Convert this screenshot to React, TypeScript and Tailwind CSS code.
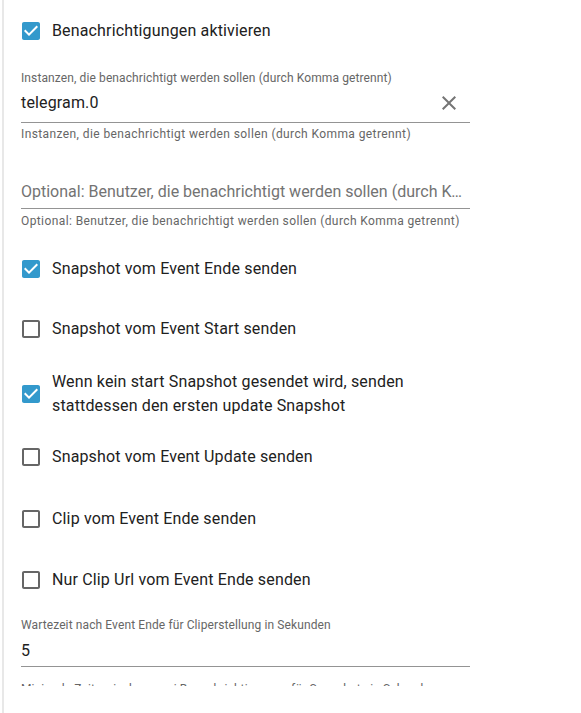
import React from "react";

const Checked = () => (
  <svg width="24" height="24" viewBox="0 0 24 24" className="block">
    <path
      fill="#3399cc"
      d="M19 3H5c-1.11 0-2 .9-2 2v14c0 1.1.89 2 2 2h14c1.11 0 2-.9 2-2V5c0-1.1-.89-2-2-2zm-9 14l-5-5 1.41-1.41L10 14.17l7.59-7.59L19 8l-9 9z"
    />
  </svg>
);

const Unchecked = () => (
  <svg width="24" height="24" viewBox="0 0 24 24" className="block">
    <path
      fill="#666666"
      d="M19 5v14H5V5h14m0-2H5c-1.1 0-2 .9-2 2v14c0 1.1.9 2 2 2h14c1.1 0 2-.9 2-2V5c0-1.1-.9-2-2-2z"
    />
  </svg>
);

function CheckRow({
  checked,
  children,
  className,
  tall,
}: {
  checked: boolean;
  children: React.ReactNode;
  className: string;
  tall?: boolean;
}) {
  return (
    <div className={`flex items-center shrink-0 ${tall ? "h-[48px]" : "h-[42px]"} ${className}`}>
      <div className="w-[42px] h-[42px] ml-[-11px] flex items-center justify-center shrink-0">
        {checked ? <Checked /> : <Unchecked />}
      </div>
      <div className="text-[16px] leading-[24px] tracking-[0.15px] text-[#212121]">{children}</div>
    </div>
  );
}

export default function App() {
  return (
    <div className="w-[581px] h-[713px] bg-white flex font-['Roboto',sans-serif] overflow-hidden">
      <div className="w-[2px] shrink-0" />
      <div className="w-[2px] shrink-0 bg-[#e8e8e8]" />
      <div className="pl-[17px] w-[470px] flex flex-col">
        <CheckRow checked className="mt-[10px]">
          Benachrichtigungen aktivieren
        </CheckRow>

        {/* Field 1 */}
        <div className="mt-[19px] w-[449px] flex flex-col shrink-0">
          <div className="text-[12px] leading-[14px] tracking-[0.11px] text-[#666666]">
            Instanzen, die benachrichtigt werden sollen (durch Komma getrennt)
          </div>
          <div className="mt-[6px] pb-[7px] border-b border-[#949494] flex items-center justify-between">
            <span className="text-[16px] leading-[24px] tracking-[0.15px] text-[#212121]">telegram.0</span>
            <svg width="24" height="24" viewBox="0 0 24 24" className="mr-[9px]">
              <path
                fill="#757575"
                d="M19 6.41 17.59 5 12 10.59 6.41 5 5 6.41 10.59 12 5 17.59 6.41 19 12 13.41 17.59 19 19 17.59 13.41 12z"
              />
            </svg>
          </div>
          <div className="mt-[4px] text-[12px] leading-[14px] tracking-[0.4px] text-[#666666]">
            Instanzen, die benachrichtigt werden sollen (durch Komma getrennt)
          </div>
        </div>

        {/* Field 2 */}
        <div className="mt-[19px] w-[449px] flex flex-col shrink-0">
          <div className="h-[14px]" />
          <div className="mt-[6px] pb-[4px] border-b border-[#949494]">
            <div className="text-[16px] leading-[24px] text-[#737373] whitespace-nowrap overflow-hidden text-ellipsis">
              Optional: Benutzer, die benachrichtigt werden sollen (durch Komma getrennt)
            </div>
          </div>
          <div className="mt-[5px] text-[12px] leading-[14px] tracking-[0.4px] text-[#666666]">
            Optional: Benutzer, die benachrichtigt werden sollen (durch Komma getrennt)
          </div>
        </div>

        <CheckRow checked className="mt-[20px]">
          Snapshot vom Event Ende senden
        </CheckRow>
        <CheckRow checked={false} className="mt-[18px]">
          Snapshot vom Event Start senden
        </CheckRow>
        <CheckRow checked tall className="mt-[20px]">
          Wenn kein start Snapshot gesendet wird, senden
          <br />
          stattdessen den ersten update Snapshot
        </CheckRow>
        <CheckRow checked={false} className="mt-[18px]">
          Snapshot vom Event Update senden
        </CheckRow>
        <CheckRow checked={false} className="mt-[20px]">
          Clip vom Event Ende senden
        </CheckRow>
        <CheckRow checked={false} className="mt-[19px]">
          Nur Clip Url vom Event Ende senden
        </CheckRow>

        {/* Field 3 */}
        <div className="mt-[17px] w-[449px] flex flex-col shrink-0">
          <div className="text-[12px] leading-[14px] tracking-[0.11px] text-[#666666]">
            Wartezeit nach Event Ende für Cliperstellung in Sekunden
          </div>
          <div className="mt-[7px] pb-[3px] border-b border-[#949494]">
            <span className="text-[16px] leading-[24px] tracking-[0.15px] text-[#212121]">5</span>
          </div>
          <div className="mt-[15px] h-[4px] overflow-hidden">
            <div className="text-[12px] leading-[14px] tracking-[0.11px] text-[#666666] whitespace-nowrap">
              Minimale Zeit zwischen zwei Benachrichtigungen für Snapshots in Sekunden
            </div>
          </div>
        </div>
      </div>
    </div>
  );
}
